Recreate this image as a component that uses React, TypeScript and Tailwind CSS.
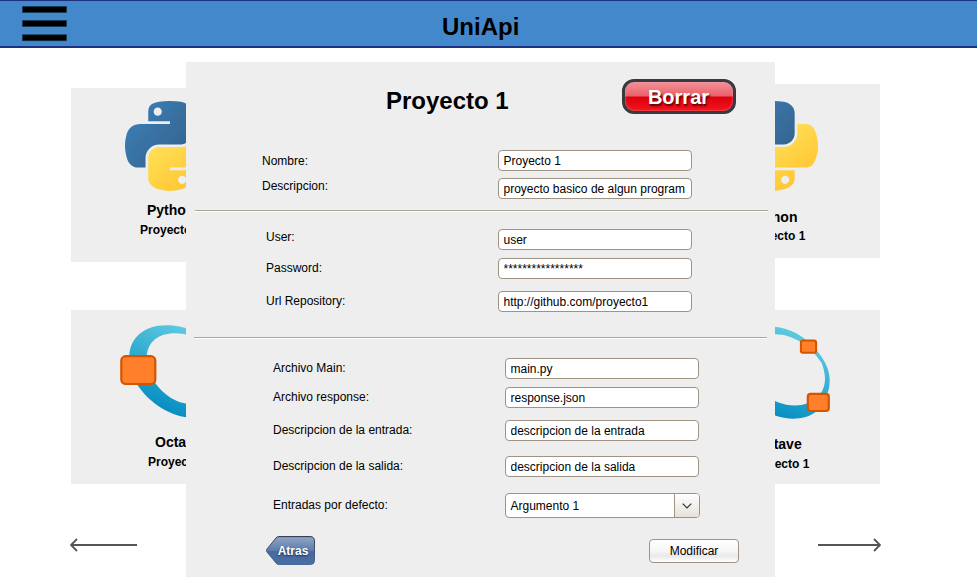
import React from "react";

const BLUE_SNAKE =
  "M60.51 6.398C55.927 6.419 51.549 6.81 47.698 7.492C36.351 9.496 34.291 13.692 34.291 21.429V31.648H61.104V35.054H24.229C16.436 35.054 9.613 39.738 7.479 48.648C5.017 58.861 4.908 65.234 7.479 75.898C9.385 83.836 13.936 89.492 21.729 89.492H30.948V77.242C30.948 68.392 38.605 60.585 47.698 60.585H74.479C81.934 60.585 87.885 54.447 87.885 46.96V21.429C87.885 14.163 81.755 8.704 74.479 7.492C69.873 6.725 65.094 6.377 60.51 6.398ZM46.01 14.617C48.78 14.617 51.041 16.915 51.041 19.742C51.041 22.558 48.78 24.835 46.01 24.835C43.231 24.835 40.979 22.558 40.979 19.742C40.979 16.915 43.231 14.617 46.01 14.617Z";
const YELLOW_SNAKE =
  "M91.229 35.054V46.96C91.229 56.191 83.403 63.96 74.479 63.96H47.698C40.362 63.96 34.291 70.239 34.291 77.585V103.117C34.291 110.383 40.61 114.657 47.698 116.742C56.185 119.237 64.324 119.688 74.479 116.742C81.229 114.787 87.885 110.854 87.885 103.117V92.898H61.104V89.492H101.291C109.084 89.492 111.988 84.056 114.698 75.898C117.497 67.499 117.438 59.422 114.698 48.648C112.772 40.891 109.094 35.054 101.291 35.054ZM76.166 99.71C78.946 99.71 81.198 101.988 81.198 104.804C81.198 107.631 78.946 109.929 76.166 109.929C73.397 109.929 71.135 107.631 71.135 104.804C71.135 101.988 73.397 99.71 76.166 99.71Z";

function PythonLogo() {
  return (
    <svg width="93" height="90" viewBox="5.6 6.4 114.8 112.4" preserveAspectRatio="none" className="shrink-0">
      <defs>
        <linearGradient id="pyBlue" gradientUnits="userSpaceOnUse" x1="7" y1="9" x2="71" y2="64">
          <stop offset="0" stopColor="#3c82bb" />
          <stop offset="1" stopColor="#366794" />
        </linearGradient>
        <linearGradient id="pyYellow" gradientUnits="userSpaceOnUse" x1="45" y1="62" x2="84" y2="112">
          <stop offset="0" stopColor="#ffdf55" />
          <stop offset="1" stopColor="#ffc734" />
        </linearGradient>
      </defs>
      <path d={BLUE_SNAKE} fill="url(#pyBlue)" />
      <path d={YELLOW_SNAKE} fill="url(#pyYellow)" />
    </svg>
  );
}

function OctaveLogo() {
  return (
    <svg width="111" height="96" viewBox="0 0 111 96" className="shrink-0">
      <defs>
        <linearGradient id="octRing" gradientUnits="userSpaceOnUse" x1="74" y1="8" x2="40" y2="82">
          <stop offset="0" stopColor="#5cc8e0" />
          <stop offset="1" stopColor="#078fc2" />
        </linearGradient>
      </defs>
      <path
        fillRule="evenodd"
        fill="url(#octRing)"
        d="M9.3 31C10 13 24 .3 46 .3C69 .3 85 10 98 26C106 36 110 46 109.7 55C109.5 60 109 64 107 68C102 84 92 92.7 72.7 92.7C52 92.7 26 78 12 51C8 44 8 38 9.3 31ZM26.7 31C28 17 38 8.3 55 8.3C75 8.3 92 22 101.7 37C105 46 105.5 54 104.7 56C104 68 93 79.5 75 79.5C58 79.5 42 71 30 50C26 42 26 37 26.7 31Z"
      />
      <g fill="#ff7f2a" stroke="#d45500">
        <rect x="1.3" y="31.2" width="34" height="27.8" rx="4.5" strokeWidth="2.2" />
        <rect x="80.9" y="14.4" width="15.2" height="12.4" rx="2" strokeWidth="2" />
        <rect x="87.8" y="67.8" width="21" height="17.2" rx="3" strokeWidth="2.2" />
      </g>
    </svg>
  );
}

type CardProps = { logo: React.ReactNode; name: string; className: string; nameClass: string; projectClass: string };

function ProjectCard({ logo, name, className, nameClass, projectClass }: CardProps) {
  return (
    <article className={`flex h-[174px] w-[200px] flex-col items-start bg-[#eee] font-bold ${className}`}>
      {logo}
      <h2 className={`text-[14px] leading-4 ${nameClass}`}>{name}</h2>
      <p className={`text-[12px] leading-[14px] ${projectClass}`}>Proyecto 1</p>
    </article>
  );
}

type FieldProps = { label: string; value: string; className?: string; labelClass?: string };

function Field({ label, value, className = "", labelClass = "" }: FieldProps) {
  return (
    <label className={`flex h-[21px] items-center ${className}`}>
      <span className={`w-[232px] ${labelClass}`}>{label}</span>
      <input
        readOnly
        defaultValue={value}
        className="h-[21px] w-[194px] rounded-[4px] border border-[#9f9384] bg-white pr-1.5 pl-[4.5px] leading-[14px] outline-none"
      />
    </label>
  );
}

function Divider({ className }: { className: string }) {
  return <div className={`h-[2px] w-[573px] border-t border-b border-t-[#aca899] border-b-white ${className}`} />;
}

function ProjectDialog() {
  return (
    <section className="absolute top-[14px] left-[186px] flex h-[515px] w-[589px] flex-col bg-[#eee] text-[12px] leading-[14px]">
      <header className="flex h-[88px] items-start pl-[200px]">
        <h2 className="mt-[25px] w-[236px] text-[24px] leading-7 font-bold">Proyecto 1</h2>
        <button className="mt-[17px] h-[35px] w-[114px] rounded-[12px] border-[3px] border-[#363a42] bg-[linear-gradient(#f39198_0%,#e9616a_48%,#df000c_52%,#ef1620_100%)] text-[20px] leading-[24px] font-bold text-white shadow-[inset_0_0_2px_#ff9a9f] [text-shadow:1px_2px_2px_#5a0000]">
          <span className="block pt-px pr-px">Borrar</span>
        </button>
      </header>

      <div className="pl-[76px]">
        <Field label="Nombre:" value="Proyecto 1" labelClass="w-[236px]" />
        <Field label="Descripcion:" value="proyecto basico de algun program" labelClass="w-[236px] pb-[5px]" className="mt-[7px]" />
      </div>
      <Divider className="mt-[11px] ml-[9px]" />

      <div className="mt-[17px] pl-[80px]">
        <Field label="User:" value="user" labelClass="pb-[5px]" />
        <Field label="Password:" value="*****************" className="mt-2" labelClass="pb-[2px]" />
        <Field label="Url Repository:" value="http://github.com/proyecto1" className="mt-3" labelClass="pb-px" />
      </div>
      <Divider className="mt-[25px] ml-[8px]" />

      <div className="mt-[19px] pl-[87px]">
        <Field label="Archivo Main:" value="main.py" labelClass="pb-[2px]" />
        <Field label="Archivo response:" value="response.json" className="mt-2" labelClass="pb-[2px]" />
        <Field label="Descripcion de la entrada:" value="descripcion de la entrada" className="mt-3" labelClass="pb-[2px]" />
        <Field label="Descripcion de la salida:" value="descripcion de la salida" className="mt-[15px]" labelClass="pb-[2px]" />
        <div className="mt-4 flex h-[25px] items-center">
          <span className="w-[232px] pb-[2px]">Entradas por defecto:</span>
          <div className="flex h-[25px] w-[195px] overflow-hidden rounded-[4px] border border-[#9f9384] bg-white">
            <span className="flex flex-1 items-center pl-[4.5px]">Argumento 1</span>
            <span className="flex w-[25px] items-center justify-center border-l border-[#9f9384] bg-linear-to-b from-white to-[#e6e2d9]">
              <svg width="10" height="6" viewBox="0 0 10 6" fill="none" stroke="#333" strokeWidth="1.2">
                <path d="M.7 .7L5 5L9.3 .7" />
              </svg>
            </span>
          </div>
        </div>
      </div>

      <footer className="mt-[18px] flex items-start pr-[36px] pl-[80px]">
        <button className="grid h-[29px] w-[49px] text-white">
          <svg width="49" height="29" viewBox="0 0 49 29" className="col-start-1 row-start-1">
            <defs>
              <linearGradient id="backFill" x1="0" y1="0" x2="0" y2="1">
                <stop offset="0" stopColor="#7890b5" />
                <stop offset=".08" stopColor="#8aa0c2" />
                <stop offset=".5" stopColor="#5d7bab" />
                <stop offset=".53" stopColor="#49699f" />
                <stop offset="1" stopColor="#476fa5" />
              </linearGradient>
              <linearGradient id="backEdge" x1="0" y1="0" x2="0" y2="1">
                <stop offset="0" stopColor="#354056" />
                <stop offset="1" stopColor="#48699a" />
              </linearGradient>
            </defs>
            <path d="M12.5 .5H44Q48.500 .5 48.500 5V24.500Q48.500 28.500 44.500 28.500H12.500Q11 28.500 10 27L.6 15.500Q.2 14.500 .6 13.500L10 2Q11 .5 12.500 .5Z" fill="url(#backFill)" stroke="url(#backEdge)" />
          </svg>
          <span className="col-start-1 row-start-1 self-center pl-[5px] font-bold [text-shadow:0_1px_2px_#1a2b45]">Atras</span>
        </button>
        <button className="mt-[3px] ml-auto h-6 w-[90px] rounded-[4px] border border-[#9f9384] bg-[linear-gradient(#fff_0%,#f6f6f6_50%,#e9e9e9_72%,#fff_100%)]">
          Modificar
        </button>
      </footer>
    </section>
  );
}

export default function App() {
  return (
    <div className="flex h-[584px] w-[977px] flex-col overflow-hidden bg-white font-['Liberation_Sans',Arial,sans-serif] text-black">
      <header className="flex h-12 shrink-0 items-start border-t border-b-2 border-[#1c3184] bg-[#4488cc]">
        <svg width="45" height="36" viewBox="0 0 45 36" className="mt-[5px] ml-[22px]">
          <path d="M.5 .5H44.500V6.500H.5ZM.5 14.500H44.500V20.500H.5ZM.5 28.700H44.500V34.700H.5Z" stroke="#12324f" strokeWidth=".6" />
        </svg>
        <h1 className="mt-3 ml-[375px] text-[24px] leading-7 font-bold">UniApi</h1>
      </header>

      <main className="relative flex-1 px-[71px]">
        <div className="flex w-[809px] justify-between pt-9">
          <ProjectCard className="mt-1 pt-[13px]" logo={<div className="ml-[54px] h-[91px]"><PythonLogo /></div>} name="Python" nameClass="mt-[10px] ml-[76px]" projectClass="mt-[5px] ml-[69px]" />
          <ProjectCard className="pt-[17px]" logo={<div className="ml-[48px] h-[91px]"><PythonLogo /></div>} name="Python" nameClass="mt-[17px] ml-[70px]" projectClass="mt-1 ml-[64px]" />
        </div>
        <div className="mt-12 flex w-[809px] justify-between">
          <ProjectCard className="pt-[15px]" logo={<div className="ml-[49px] h-[96px]"><OctaveLogo /></div>} name="Octave" nameClass="mt-[13px] ml-[84px]" projectClass="mt-[5px] ml-[77px]" />
          <ProjectCard className="pt-[16px]" logo={<div className="ml-[40px] h-[96px]"><OctaveLogo /></div>} name="Octave" nameClass="mt-[14px] ml-[75px]" projectClass="mt-[5px] ml-[68px]" />
        </div>
        <nav className="mt-[54px] -ml-px flex w-[811px] justify-between">
          <svg width="67" height="14" viewBox="0 0 67 14" fill="none" stroke="#555" strokeWidth="1.8">
            <path d="M1 7H67M7 1L1 7L7 13" />
          </svg>
          <svg width="63" height="14" viewBox="0 0 63 14" fill="none" stroke="#555" strokeWidth="1.8">
            <path d="M0 7H62M56 1L62 7L56 13" />
          </svg>
        </nav>
        <ProjectDialog />
      </main>
    </div>
  );
}
